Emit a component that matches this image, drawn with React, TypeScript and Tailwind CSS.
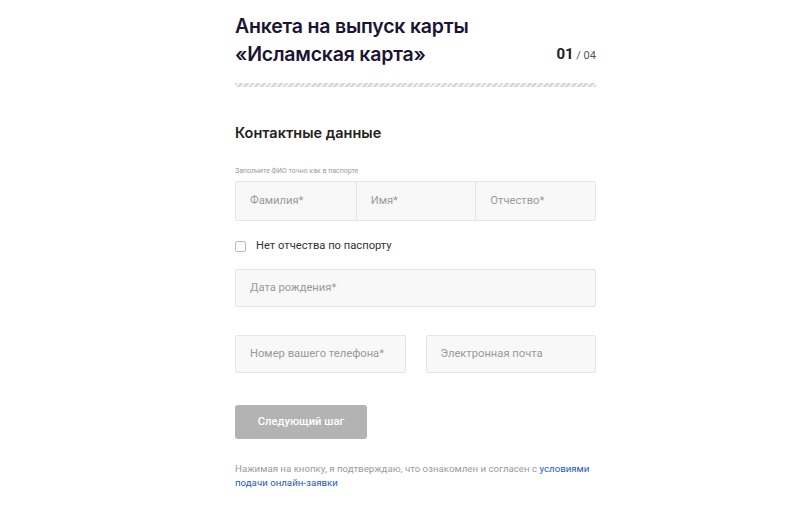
import React from "react";

export default function App() {
  const field =
    "h-[38px] flex items-center px-[14px] text-[11.2px] text-[#9a9a9a] bg-[#f8f8f8]";
  return (
    <div className="w-[800px] h-[507px] bg-white overflow-hidden font-['Roboto',sans-serif]">
      <div className="w-[361px] ml-[235px] pt-[12px]">
        <div className="flex items-end justify-between">
          <h1 className="font-['Inter',sans-serif] font-semibold text-[19.5px] leading-[28px] text-[#1c1433] tracking-[-0.2px]">
            Анкета на выпуск карты
            <br />
            «Исламская карта»
          </h1>
          <div className="mb-[2px] text-[#222] font-['Roboto',sans-serif]">
            <span className="font-bold text-[15px]">01</span>
            <span className="text-[11px] text-[#555]"> / 04</span>
          </div>
        </div>
        <div className="mt-[15px] h-[4px] w-full bg-[repeating-linear-gradient(-45deg,#d6d6d6_0px,#d6d6d6_2px,#f3f3f3_2px,#f3f3f3_4px)]" />
        <h2 className="mt-[36px] font-['Inter',sans-serif] font-semibold text-[14.5px] leading-[20px] text-[#222]">
          Контактные данные
        </h2>
        <div className="mt-[24px] text-[7px] leading-[9px] text-[#999]">
          Заполните ФИО точно как в паспорте
        </div>
        <div className="mt-[5px] grid grid-cols-3 border border-[#e6e6e6] rounded-[2px] overflow-hidden">
          <div className={field}>Фамилия*</div>
          <div className={field + " border-l border-[#e6e6e6]"}>Имя*</div>
          <div className={field + " border-l border-[#e6e6e6]"}>Отчество*</div>
        </div>
        <label className="mt-[18px] flex items-center gap-[10px]">
          <span className="w-[11px] h-[11px] border border-[#bbb] rounded-[2px] bg-white" />
          <span className="text-[11.2px] leading-[14px] text-[#333]">Нет отчества по паспорту</span>
        </label>
        <div className={"mt-[16px] border border-[#e6e6e6] rounded-[2px] " + field}>
          Дата рождения*
        </div>
        <div className="mt-[28px] flex gap-[20px]">
          <div className={"flex-1 border border-[#e6e6e6] rounded-[2px] " + field}>
            Номер вашего телефона*
          </div>
          <div className={"flex-1 border border-[#e6e6e6] rounded-[2px] " + field}>
            Электронная почта
          </div>
        </div>
        <button className="mt-[32px] w-[132px] h-[34px] rounded-[3px] bg-[#b3b3b3] text-white text-[11.2px] font-medium">
          Следующий шаг
        </button>
        <p className="mt-[23px] text-[9.7px] leading-[13.5px] text-[#9a9a9a]">
          Нажимая на кнопку, я подтверждаю, что ознакомлен и согласен с{" "}
          <span className="text-[#2457c5]">условиями подачи онлайн-заявки</span>
        </p>
      </div>
    </div>
  );
}
